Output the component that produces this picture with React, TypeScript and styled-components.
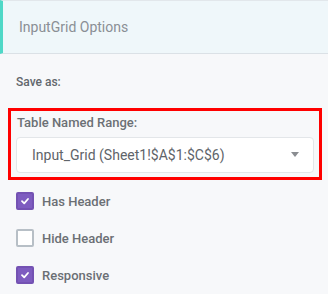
import React, { useState } from "react";
import styled, { createGlobalStyle } from "styled-components";

const GlobalStyle = createGlobalStyle`
  html, body {
    margin: 0;
    padding: 0;
    background: #f7f8fa;
    font-family: Roboto, "Liberation Sans", Arial, sans-serif;
  }
`;

type Option = { key: string; label: string };

const options: Option[] = [
  { key: "hasHeader", label: "Has Header" },
  { key: "hideHeader", label: "Hide Header" },
  { key: "responsive", label: "Responsive" },
];

export default function App() {
  const [checked, setChecked] = useState<Record<string, boolean>>({
    hasHeader: true,
    hideHeader: false,
    responsive: true,
  });

  return (
    <Panel>
      <GlobalStyle />
      <Header>InputGrid Options</Header>
      <Body>
        <SaveAs>Save as:</SaveAs>
        <Highlight>
          <FieldLabel>Table Named Range:</FieldLabel>
          <Select>
            <span>Input_Grid (Sheet1!$A$1:$C$6)</span>
            <Caret />
          </Select>
        </Highlight>
        <CheckList>
          {options.map((o) => (
            <CheckRow
              key={o.key}
              onClick={() => setChecked((c) => ({ ...c, [o.key]: !c[o.key] }))}
            >
              <Box checked={checked[o.key]}>
                {checked[o.key] && (
                  <svg width="10" height="10" viewBox="0 0 10 10">
                    <path
                      d="M2 5.2 L4.2 7.3 L8 3"
                      fill="none"
                      stroke="#fff"
                      strokeWidth="1.8"
                      strokeLinecap="round"
                      strokeLinejoin="round"
                    />
                  </svg>
                )}
              </Box>
              <CheckLabel>{o.label}</CheckLabel>
            </CheckRow>
          ))}
        </CheckList>
      </Body>
    </Panel>
  );
}

const Panel = styled.div`
  width: 328px;
  height: 294px;
  background: #f7f8fa;
  overflow: hidden;
`;

const Header = styled.div`
  display: flex;
  align-items: center;
  height: 52px;
  padding-left: 16px;
  background: #eff7fa;
  border-top: 1px solid #e2e7eb;
  border-bottom: 1px solid #dbe1e6;
  border-left: 3px solid #4fd8c7;
  color: #8a8f95;
  font-size: 14px;
`;

const Body = styled.div`
  padding: 0 6px 0 8px;
`;

const SaveAs = styled.div`
  padding: 20px 0 0 8px;
  margin-bottom: 18px;
  line-height: 16px;
  font-size: 12px;
  font-weight: 500;
  color: #62676c;
`;

const Highlight = styled.div`
  border: 3px solid #ff0000;
  padding: 4px 5px;
  display: flex;
  flex-direction: column;
  gap: 6px;
`;

const FieldLabel = styled.div`
  padding-left: 1px;
  line-height: 16px;
  font-size: 13px;
  font-weight: 500;
  color: #6b7075;
`;

const Select = styled.div`
  display: flex;
  align-items: center;
  justify-content: space-between;
  height: 34px;
  padding: 0 14px 0 15px;
  background: #fff;
  border: 1px solid #e3e6e9;
  border-radius: 4px;
  font-size: 14px;
  color: #606469;
`;

const Caret = styled.span`
  width: 0;
  height: 0;
  border-left: 4px solid transparent;
  border-right: 4px solid transparent;
  border-top: 5px solid #8a8d91;
  margin-top: -2px;
`;

const CheckList = styled.div`
  display: flex;
  flex-direction: column;
  gap: 19px;
  margin-top: 12px;
  padding-left: 8px;
`;

const CheckRow = styled.label`
  display: flex;
  align-items: center;
  gap: 8px;
  height: 18px;
  cursor: pointer;
`;

const Box = styled.span<{ checked: boolean }>`
  box-sizing: border-box;
  display: flex;
  align-items: center;
  justify-content: center;
  width: 18px;
  height: 18px;
  border-radius: 2px;
  border: 2px solid ${(p) => (p.checked ? "#7452b3" : "#b7bfc6")};
  background: ${(p) => (p.checked ? "#7e5cc0" : "#fff")};
`;

const CheckLabel = styled.span`
  font-size: 13px;
  font-weight: 500;
  color: #6b6f74;
`;
